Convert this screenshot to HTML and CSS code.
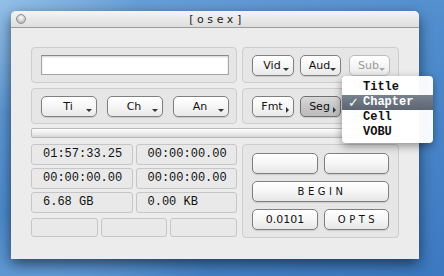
FILE: index.html
```html
<!DOCTYPE html>
<html lang="en">
<head>
    <meta charset="UTF-8">
    <title>osex</title>
    <link rel="stylesheet" href="styles.css">
</head>
<body>
    <div class="window">
        <div class="titlebar">
            <span class="close-btn"></span>
            <span class="title">[osex]</span>
        </div>

        <div class="content">
            <div class="panel panel-source">
                <input class="name-field" type="text">
            </div>

            <div class="panel panel-streams">
                <button class="pop down w-vid">Vid</button>
                <button class="pop down w-aud">Aud</button>
                <button class="pop down w-sub" disabled>Sub</button>
            </div>

            <div class="panel panel-nav">
                <button class="pop down w-nav">Ti</button>
                <button class="pop down w-nav">Ch</button>
                <button class="pop down w-nav">An</button>
            </div>

            <div class="panel panel-mode">
                <button class="pop right w-vid">Fmt</button>
                <button class="pop right w-aud pressed">Seg</button>
            </div>

            <div class="progress"></div>

            <div class="stats">
                <div class="stat">01:57:33.25</div>
                <div class="stat">00:00:00.00</div>
                <div class="stat">00:00:00.00</div>
                <div class="stat">00:00:00.00</div>
                <div class="stat">6.68 GB</div>
                <div class="stat">0.00 KB</div>
                <div class="stat-row">
                    <div class="stat"></div>
                    <div class="stat"></div>
                    <div class="stat"></div>
                </div>
            </div>

            <div class="panel panel-actions">
                <button class="btn"></button>
                <button class="btn"></button>
                <button class="btn wide spaced">BEGIN</button>
                <button class="btn">0.0101</button>
                <button class="btn spaced">OPTS</button>
            </div>
        </div>

        <!-- popup menu for Seg -->
        <ul class="menu">
            <li>Title</li>
            <li class="selected">Chapter</li>
            <li>Cell</li>
            <li>VOBU</li>
        </ul>
    </div>
</body>
</html>
```

FILE: styles.css
```css
html, body {
    height: 100%;
}

body {
    margin: 0;
    padding: 11px;
    box-sizing: border-box;
    font-family: "DejaVu Sans", "Liberation Sans", sans-serif;
    overflow: hidden;
    background:
        radial-gradient(ellipse 260px 120px at 40px 300px, rgba(150, 200, 240, 0.45), transparent 70%),
        radial-gradient(ellipse 200px 160px at 0 0, rgba(170, 210, 240, 0.6), transparent 70%),
        linear-gradient(160deg, #6fa4da 0%, #4f8ccd 45%, #3b78c0 100%);
}

.window {
    position: relative;
    width: 408px;
    height: 248px;
    background: #ececec;
    border-radius: 5px 5px 0 0;
    box-shadow: 0 5px 14px rgba(0, 0, 0, 0.55);
}

.titlebar {
    position: relative;
    height: 16px;
    border-bottom: 1px solid #9c9c9c;
    border-radius: 5px 5px 0 0;
    background: linear-gradient(#f4f4f4, #dedede);
    display: flex;
    align-items: center;
    justify-content: center;
}

.close-btn {
    position: absolute;
    left: 5px;
    top: 3px;
    width: 10px;
    height: 10px;
    border-radius: 50%;
    border: 1px solid #8e8e8e;
    box-sizing: border-box;
    background: radial-gradient(circle at 50% 35%, #ffffff 0%, #d4d4d4 45%, #a9a9a9 100%);
}

.title {
    font-size: 11px;
    letter-spacing: 3.6px;
    color: #222;
    margin-left: 4px;
}

.content {
    display: grid;
    grid-template-columns: 206px 157px;
    grid-template-rows: 36px 36px 9px 95px;
    column-gap: 5px;
    row-gap: 5px;
    padding: 19px 20px 0 20px;
}

.panel {
    background: #e6e6e6;
    border: 1px solid #cdcdcd;
    border-radius: 4px;
    box-sizing: border-box;
    display: flex;
    align-items: center;
}

.panel-source {
    padding: 0 7px 0 9px;
}

.name-field {
    width: 188px;
    height: 20px;
    box-sizing: border-box;
    border: 1px solid #a6a6a6;
    border-top-color: #8a8a8a;
    background: #fff;
    box-shadow: inset 0 1px 2px rgba(0, 0, 0, 0.18);
    padding: 0;
}

.panel-streams,
.panel-mode {
    padding-left: 9px;
    gap: 6px;
}

.panel-nav {
    padding-left: 9px;
    gap: 10px;
}

.pop {
    position: relative;
    height: 21px;
    padding: 0 2px 0 0;
    font-family: "DejaVu Sans", "Liberation Sans", sans-serif;
    font-size: 11px;
    color: #111;
    background: linear-gradient(#ffffff, #f6f6f6 50%, #e9e9e9);
    border: 1px solid #7f7f7f;
    border-radius: 5px;
    box-shadow: 0 1px 1px rgba(0, 0, 0, 0.12);
}

.w-vid { width: 42px; }
.w-aud { width: 41px; }
.w-sub { width: 41px; margin-left: 2px; }
.w-nav { width: 56px; }

.pop:disabled {
    color: #9a9a9a;
    border-color: #bcbcbc;
    box-shadow: none;
}

.pop.pressed {
    background: linear-gradient(#d9d9d9, #c6c6c6 50%, #bdbdbd);
    border-color: #6f6f6f;
}

.pop.down::after {
    content: "";
    position: absolute;
    right: 4px;
    bottom: 4px;
    border-left: 3px solid transparent;
    border-right: 3px solid transparent;
    border-top: 3px solid #333;
}

.pop.down:disabled::after {
    border-top-color: #a8a8a8;
}

.pop.right::after {
    content: "";
    position: absolute;
    right: 4px;
    bottom: 3px;
    border-top: 3px solid transparent;
    border-bottom: 3px solid transparent;
    border-left: 3px solid #333;
}

.progress {
    grid-column: 1 / 3;
    margin-top: -1px;
    border: 1px solid #b9b9b9;
    border-radius: 2px;
    background: linear-gradient(#fdfdfd, #ececec 55%, #d6d6d6);
}

.stats {
    display: grid;
    grid-template-columns: 1fr 1fr;
    grid-auto-rows: 21px;
    gap: 3px;
    margin-top: 1px;
}

.stat {
    background: #e9e9e9;
    border: 1px solid #c6c6c6;
    border-radius: 3px;
    box-sizing: border-box;
    padding-left: 11px;
    font-family: "Liberation Mono", "DejaVu Sans Mono", monospace;
    font-size: 12px;
    line-height: 19px;
    color: #111;
}

.stat-row {
    grid-column: 1 / 3;
    display: grid;
    grid-template-columns: 1fr 1fr 1fr;
    gap: 3px;
    margin-top: 2px;
}

.panel-actions {
    margin-top: 1px;
    display: grid;
    grid-template-columns: 66px 65px;
    grid-auto-rows: 21px;
    column-gap: 6px;
    row-gap: 7px;
    align-content: start;
    padding: 8px 0 0 9px;
}

.btn {
    height: 21px;
    padding: 0;
    font-family: "DejaVu Sans", "Liberation Sans", sans-serif;
    font-size: 11px;
    color: #111;
    background: linear-gradient(#ffffff, #f6f6f6 50%, #e6e6e6);
    border: 1px solid #7f7f7f;
    border-radius: 5px;
    box-shadow: 0 1px 1px rgba(0, 0, 0, 0.12);
}

.btn.wide {
    grid-column: 1 / 3;
}

.btn.spaced {
    font-size: 10px;
    letter-spacing: 3.5px;
    padding-left: 3px;
}

.menu {
    position: absolute;
    left: 331px;
    top: 65px;
    width: 91px;
    margin: 0;
    padding: 4px 0 3px 0;
    list-style: none;
    background: rgba(255, 255, 255, 0.96);
    border-radius: 4px;
    box-shadow: 0 3px 8px rgba(0, 0, 0, 0.4);
}

.menu li {
    height: 15px;
    line-height: 15px;
    padding-left: 21px;
    font-family: "Liberation Mono", "DejaVu Sans Mono", monospace;
    font-size: 12px;
    font-weight: bold;
    color: #111;
}

.menu li.selected {
    position: relative;
    color: #fff;
    background: linear-gradient(#78828f, #5c6571);
}

.menu li.selected::before {
    content: "✓";
    position: absolute;
    left: 6px;
    font-family: "DejaVu Sans", sans-serif;
    font-size: 13px;
}
```
